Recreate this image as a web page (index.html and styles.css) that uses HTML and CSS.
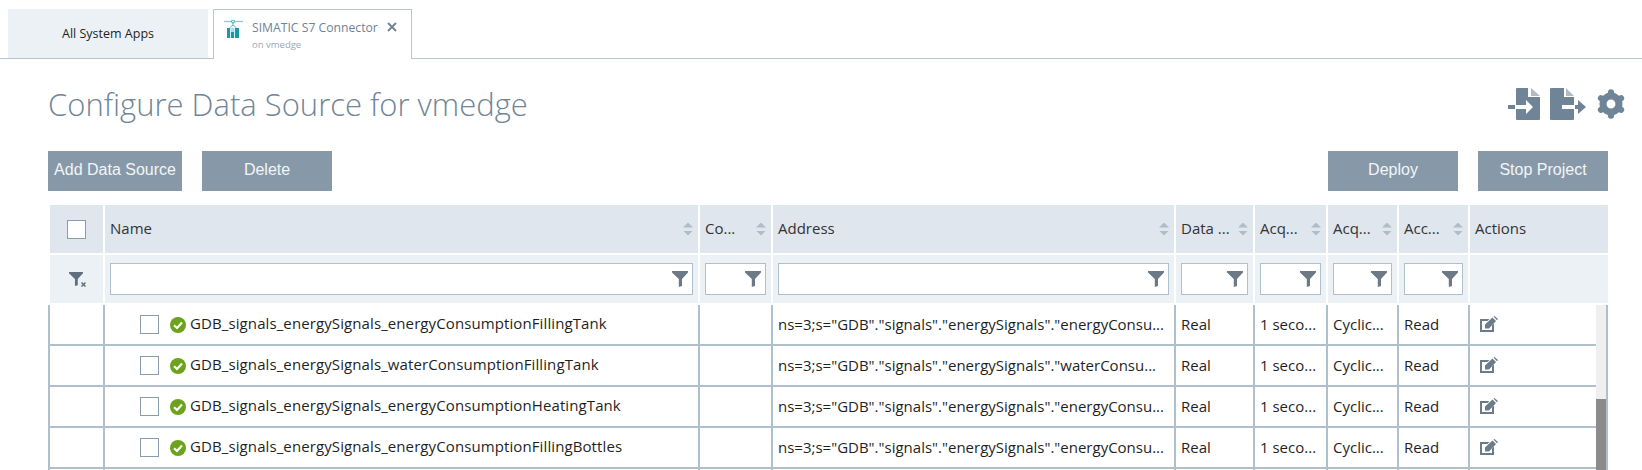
FILE: index.html
```html
<!DOCTYPE html>
<html lang="en">
<head>
    <meta charset="UTF-8" />
    <title>Configure Data Source</title>
    <link rel="stylesheet" href="styles.css">
</head>
<body>
    <svg class="defs" width="0" height="0">
        <symbol id="funnel" viewBox="0 0 16 16">
            <path d="M0 0H16V1.5L10 8V15L6.8 16V8L0 1.5Z" />
        </symbol>
        <symbol id="edit" viewBox="0 0 18 16">
            <path d="M0 3H9.500L7.500 5H2V14H12V9.500L14 7.500V16H0Z" />
            <path d="M5 12.500V8.500L12.500 1.500L16 5L9 12.500ZM13.500 .6L14.500 0L18 3L17 4.200Z" />
        </symbol>
        <symbol id="ok" viewBox="0 0 16 16">
            <circle cx="8" cy="8" r="8" fill="#6ba31c" />
            <path d="M4 8.200L7 11L12 5.500" fill="none" stroke="#fff" stroke-width="2.200" />
        </symbol>
    </svg>

    <div class="page">
        <nav class="tabs">
            <div class="tab tab-plain">All System Apps</div>
            <div class="tab tab-active">
                <svg class="tab-logo" viewBox="0 0 20 18" width="20" height="18">
                    <path d="M0 1.500H19" stroke="#7fcfd5" stroke-width="1.300" />
                    <circle cx="9" cy="1.500" r="1.500" fill="#fff" stroke="#27a2ad" stroke-width="1" />
                    <path d="M9 3V5M5.500 8L9 5L12.500 8" fill="none" stroke="#5cbcc4" stroke-width="1" />
                    <path d="M3 8H15V18H3Z" fill="#1a98a6" />
                    <path d="M7 8H10V12H7Z" fill="#a6dfe3" />
                    <path d="M6.500 8V18M10.500 8V18" stroke="#d8f0f2" stroke-width="1" />
                </svg>
                <div class="tab-text">
                    <div class="tab-title">SIMATIC S7 Connector</div>
                    <div class="tab-sub">on vmedge</div>
                </div>
                <svg class="tab-close" viewBox="0 0 10 10" width="10" height="10">
                    <path d="M1 1L9 9M9 1L1 9" stroke="#6f8296" stroke-width="1.800" />
                </svg>
            </div>
        </nav>

        <header class="title-row">
            <h1>Configure Data Source for vmedge</h1>
            <div class="title-icons">
                <svg viewBox="0 0 32 32" width="32" height="32">
                    <path d="M9 0Q8 0 8 1V17H18V12L25 19L18 26V21H8V31Q8 32 9 32H31Q32 32 32 31V9H20V0Z" />
                    <path d="M23 0L32 8H23Z" opacity=".55" />
                    <path d="M0 17H7V21H0Z" />
                </svg>
                <svg viewBox="0 0 36 32" width="36" height="32">
                    <path d="M1 0Q0 0 0 1V31Q0 32 1 32H23Q24 32 24 31V21H12V17H24V9H14V0Z" />
                    <path d="M16 0L24 8H16Z" opacity=".55" />
                    <path d="M25 17H28V12L36 19L28 26V21H25Z" />
                </svg>
                <svg viewBox="0 0 32 32" width="30" height="32">
                    <circle cx="16" cy="16" r="8.500" fill="none" stroke="#6f8496" stroke-width="7.500" />
                    <g stroke="#6f8496" stroke-width="6.500" stroke-linecap="round">
                        <path d="M16 3.500V6" />
                        <path d="M16 26V28.500" />
                        <path d="M5.200 9.800L7.300 11" />
                        <path d="M24.700 21L26.800 22.200" />
                        <path d="M5.200 22.200L7.300 21" />
                        <path d="M24.700 11L26.800 9.800" />
                    </g>
                </svg>
            </div>
        </header>

        <div class="toolbar">
            <button class="btn btn-wide">Add Data Source</button>
            <button class="btn">Delete</button>
            <div class="spacer"></div>
            <button class="btn">Deploy</button>
            <button class="btn">Stop Project</button>
        </div>

        <div class="head-grid">
            <div class="th th-check"><span class="check"></span></div>
            <div class="th">Name<i class="sort"></i></div>
            <div class="th">Co...<i class="sort"></i></div>
            <div class="th">Address<i class="sort"></i></div>
            <div class="th">Data ...<i class="sort"></i></div>
            <div class="th">Acq...<i class="sort"></i></div>
            <div class="th">Acq...<i class="sort"></i></div>
            <div class="th">Acc...<i class="sort"></i></div>
            <div class="th">Actions</div>

            <div class="flt flt-clear">
                <svg viewBox="0 0 18 16" width="18" height="16">
                    <use href="#funnel" x="1" width="14" height="16" />
                    <path d="M13.500 11.500L17.500 15.500M17.500 11.500L13.500 15.500" stroke="#5f6f7c" stroke-width="1.500" />
                </svg>
            </div>
            <div class="flt"><div class="flt-box"><svg class="funnel"><use href="#funnel" /></svg></div></div>
            <div class="flt"><div class="flt-box"><svg class="funnel"><use href="#funnel" /></svg></div></div>
            <div class="flt"><div class="flt-box"><svg class="funnel"><use href="#funnel" /></svg></div></div>
            <div class="flt"><div class="flt-box"><svg class="funnel"><use href="#funnel" /></svg></div></div>
            <div class="flt"><div class="flt-box"><svg class="funnel"><use href="#funnel" /></svg></div></div>
            <div class="flt"><div class="flt-box"><svg class="funnel"><use href="#funnel" /></svg></div></div>
            <div class="flt"><div class="flt-box"><svg class="funnel"><use href="#funnel" /></svg></div></div>
            <div class="flt"></div>
        </div>

        <div class="body-wrap">
            <div class="rows">
                <div class="row">
                    <div class="td"></div>
                    <div class="td td-name"><span class="check"></span><svg class="ok"><use href="#ok" /></svg><span class="name">GDB_signals_energySignals_energyConsumptionFillingTank</span></div>
                    <div class="td"></div>
                    <div class="td">ns=3;s="GDB"."signals"."energySignals"."energyConsu...</div>
                    <div class="td">Real</div>
                    <div class="td">1 seco...</div>
                    <div class="td">Cyclic...</div>
                    <div class="td">Read</div>
                    <div class="td td-act"><svg class="edit"><use href="#edit" /></svg></div>
                </div>
                <div class="row">
                    <div class="td"></div>
                    <div class="td td-name"><span class="check"></span><svg class="ok"><use href="#ok" /></svg><span class="name">GDB_signals_energySignals_waterConsumptionFillingTank</span></div>
                    <div class="td"></div>
                    <div class="td">ns=3;s="GDB"."signals"."energySignals"."waterConsu...</div>
                    <div class="td">Real</div>
                    <div class="td">1 seco...</div>
                    <div class="td">Cyclic...</div>
                    <div class="td">Read</div>
                    <div class="td td-act"><svg class="edit"><use href="#edit" /></svg></div>
                </div>
                <div class="row">
                    <div class="td"></div>
                    <div class="td td-name"><span class="check"></span><svg class="ok"><use href="#ok" /></svg><span class="name">GDB_signals_energySignals_energyConsumptionHeatingTank</span></div>
                    <div class="td"></div>
                    <div class="td">ns=3;s="GDB"."signals"."energySignals"."energyConsu...</div>
                    <div class="td">Real</div>
                    <div class="td">1 seco...</div>
                    <div class="td">Cyclic...</div>
                    <div class="td">Read</div>
                    <div class="td td-act"><svg class="edit"><use href="#edit" /></svg></div>
                </div>
                <div class="row">
                    <div class="td"></div>
                    <div class="td td-name"><span class="check"></span><svg class="ok"><use href="#ok" /></svg><span class="name">GDB_signals_energySignals_energyConsumptionFillingBottles</span></div>
                    <div class="td"></div>
                    <div class="td">ns=3;s="GDB"."signals"."energySignals"."energyConsu...</div>
                    <div class="td">Real</div>
                    <div class="td">1 seco...</div>
                    <div class="td">Cyclic...</div>
                    <div class="td">Read</div>
                    <div class="td td-act"><svg class="edit"><use href="#edit" /></svg></div>
                </div>
                <div class="row">
                    <div class="td"></div>
                    <div class="td"></div>
                    <div class="td"></div>
                    <div class="td"></div>
                    <div class="td"></div>
                    <div class="td"></div>
                    <div class="td"></div>
                    <div class="td"></div>
                    <div class="td"></div>
                </div>
            </div>
            <div class="scrollbar"><div class="thumb"></div></div>
        </div>
    </div>
</body>
</html>
```

FILE: styles.css
```css
html, body {
    margin: 0;
    height: 100%;
    overflow: hidden;
    background-color: #fff;
}

body {
    font-family: "Open Sans", sans-serif;
    font-size: 15px;
    color: #1f1f1f;
}

.defs {
    position: absolute;
}

.page {
    height: 470px;
    overflow: hidden;
}

/* tabs */
.tabs {
    display: flex;
    gap: 5px;
    height: 49px;
    margin-top: 9px;
    padding-left: 8px;
    border-bottom: 1px solid #b8c6d3;
}

.tab {
    height: 49px;
    box-sizing: border-box;
}

.tab-plain {
    width: 200px;
    background-color: #ecf1f6;
    font-size: 12.500px;
    line-height: 49px;
    text-align: center;
}

.tab-active {
    display: flex;
    width: 199px;
    height: 50px;
    padding: 10px 0 0 10px;
    border: 1px solid #b8c6d3;
    border-bottom: none;
    background-color: #fff;
}

.tab-logo {
    flex: none;
}

.tab-text {
    margin-left: 8px;
    width: 135px;
}

.tab-title {
    font-size: 12.200px;
    line-height: 15px;
    color: #6f8296;
    white-space: nowrap;
}

.tab-sub {
    margin-top: 3px;
    font-size: 9.500px;
    line-height: 14px;
    color: #9aa8b5;
}

.tab-close {
    flex: none;
    margin-top: 2px;
}

/* title */
.title-row {
    display: flex;
    justify-content: space-between;
    height: 92px;
    padding: 0 16px 0 48px;
}

h1 {
    margin: 23px 0 0;
    font-size: 31px;
    font-weight: 300;
    line-height: 44px;
    color: #718598;
}

.title-icons {
    display: flex;
    gap: 10px;
    margin-top: 29px;
    fill: #6f8496;
}

/* buttons */
.toolbar {
    display: flex;
    gap: 20px;
    padding: 0 34px 0 48px;
}

.spacer {
    flex: 1;
}

.btn {
    width: 130px;
    height: 40px;
    padding: 0 0 2px;
    border: none;
    background-color: #8799a9;
    color: #f2f5f7;
    font-family: "Liberation Sans", sans-serif;
    font-size: 16px;
}

.btn-wide {
    width: 134px;
}

/* table head */
.head-grid {
    display: grid;
    grid-template-columns: 53px 593px 71px 401px 77px 71px 69px 69px 138px;
    grid-template-rows: 48px 48px;
    gap: 2px;
    margin: 14px 34px 0 50px;
}

.th {
    display: flex;
    align-items: center;
    justify-content: space-between;
    padding: 0 5px 2px;
    background-color: #dfe6ee;
    color: #333;
    white-space: nowrap;
}

.th-check {
    justify-content: center;
    padding-bottom: 0;
}

.check {
    flex: none;
    width: 19px;
    height: 19px;
    box-sizing: border-box;
    border: 1px solid #8a9bab;
    background-color: #fff;
}

/* two small triangles, one over the other */
.sort {
    display: flex;
    flex-direction: column;
    flex: none;
    gap: 3px;
    width: 10px;
    margin-top: 2px;
}

.sort::before,
.sort::after {
    content: "";
    height: 5px;
    background-color: #b0bcc8;
}

.sort::before {
    clip-path: polygon(50% 0, 100% 100%, 0 100%);
}

.sort::after {
    clip-path: polygon(0 0, 100% 0, 50% 100%);
}

.flt {
    display: flex;
    align-items: center;
    padding: 0 5px;
    background-color: #ecf1f6;
}

.flt-clear {
    justify-content: center;
    fill: #5f6f7c;
}

.flt-box {
    display: flex;
    align-items: center;
    justify-content: flex-end;
    flex: 1;
    height: 32px;
    box-sizing: border-box;
    padding-right: 4px;
    border: 1px solid #afc0cd;
    background-color: #fff;
}

.funnel {
    width: 16px;
    height: 16px;
    fill: #6d7a86;
}

/* table body */
.body-wrap {
    display: flex;
    margin: 2px 34px 0 48px;
}

.rows {
    flex: 1;
}

.row {
    display: grid;
    grid-template-columns: 53px 593px 71px 401px 77px 71px 69px 69px 126px;
    column-gap: 2px;
    padding: 0 0 2px 2px;
    background-color: #afc0cd;
}

.td {
    display: flex;
    align-items: center;
    height: 39px;
    padding: 0 5px 2px;
    box-sizing: border-box;
    background-color: #fff;
    white-space: nowrap;
    overflow: hidden;
}

.td-name {
    padding: 0 5px 0 35px;
    letter-spacing: 0.1px;
}

.name {
    margin-bottom: 4px;
}

.ok {
    flex: none;
    width: 16px;
    height: 16px;
    margin: 0 4px 0 11px;
}

.td-act {
    padding: 0 0 1px 10px;
}

.edit {
    flex: none;
    width: 18px;
    height: 16px;
    fill: #6b7b89;
}

.scrollbar {
    flex: none;
    width: 10px;
    border-right: 2px solid #afc0cd;
    background-color: #efefef;
}

.thumb {
    height: 100px;
    margin-top: 94px;
    background-color: #8b8b8b;
}
```
